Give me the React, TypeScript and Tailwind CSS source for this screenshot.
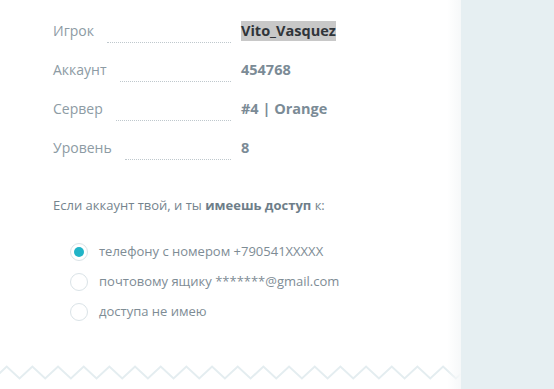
import React from "react";

const rows = [
  { label: "Игрок", value: "Vito_Vasquez", hl: true },
  { label: "Аккаунт", value: "454768" },
  { label: "Сервер", value: "#4 | Orange" },
  { label: "Уровень", value: "8" },
];

const options = [
  { text: "телефону с номером +790541XXXXX", checked: true },
  { text: "почтовому ящику *******@gmail.com" },
  { text: "доступа не имею" },
];

function Zigzag() {
  const period = 25.67;
  const pts: string[] = [];
  const top = 1.5;
  const bottom = 13.5;
  let x = 6.7 - period / 2;
  pts.push(`${x},${bottom}`);
  while (x < 470) {
    pts.push(`${x + period / 2},${top}`);
    pts.push(`${x + period},${bottom}`);
    x += period;
  }
  return (
    <svg width="461" height="15" className="block mt-auto mb-[9px]">
      <polyline points={pts.join(" ")} fill="none" stroke="#e4edf0" strokeWidth="2" />
    </svg>
  );
}

export default function App() {
  return (
    <div
      className="flex w-[554px] h-[389px] bg-white overflow-hidden"
      style={{ fontFamily: '"Open Sans", "Liberation Sans", sans-serif' }}
    >
      <div className="relative flex flex-col w-[461px] h-full bg-white">
        <div className="pl-[53px] pt-[21px] flex flex-col gap-[19px]">
          {rows.map((r) => (
            <div key={r.label} className="flex h-[20px] text-[14px] leading-[20px]">
              <div className="flex w-[178px]">
                <span className="text-[#8d9ba4]">{r.label}</span>
                <span className="flex-1 ml-[13px] h-[22px] border-b border-dotted border-[#bfc8cd]" />
              </div>
              <span
                className={
                  "ml-[10px] font-bold text-[14.5px] " +
                  (r.hl ? "bg-[#c8c8c8] text-[#30353a]" : "text-[#7b8b96]")
                }
              >
                {r.value}
              </span>
            </div>
          ))}
        </div>
        <p className="pl-[53px] mt-[38px] text-[13px] leading-[18px] text-[#75848e]">
          Если аккаунт твой, и ты <b className="font-bold text-[#6e7e89]">имеешь доступ</b> к:
        </p>
        <div className="pl-[70px] mt-[23px] flex flex-col">
          {options.map((o) => (
            <div key={o.text} className="flex items-center h-[30px]">
              <span className="w-[18px] h-[18px] rounded-full border border-[#dae3e7] bg-white flex items-center justify-center">
                {o.checked && <span className="w-[10px] h-[10px] rounded-full bg-[#21b4c7]" />}
              </span>
              <span className="ml-[11px] text-[13px] text-[#7e8c95]">{o.text}</span>
            </div>
          ))}
        </div>
        <Zigzag />
        <div className="absolute right-0 top-0 h-full w-[14px] bg-gradient-to-r from-transparent to-[#f6f8f9]" />
      </div>
      <div className="flex-1 h-full bg-[#e6eff2]" />
    </div>
  );
}
